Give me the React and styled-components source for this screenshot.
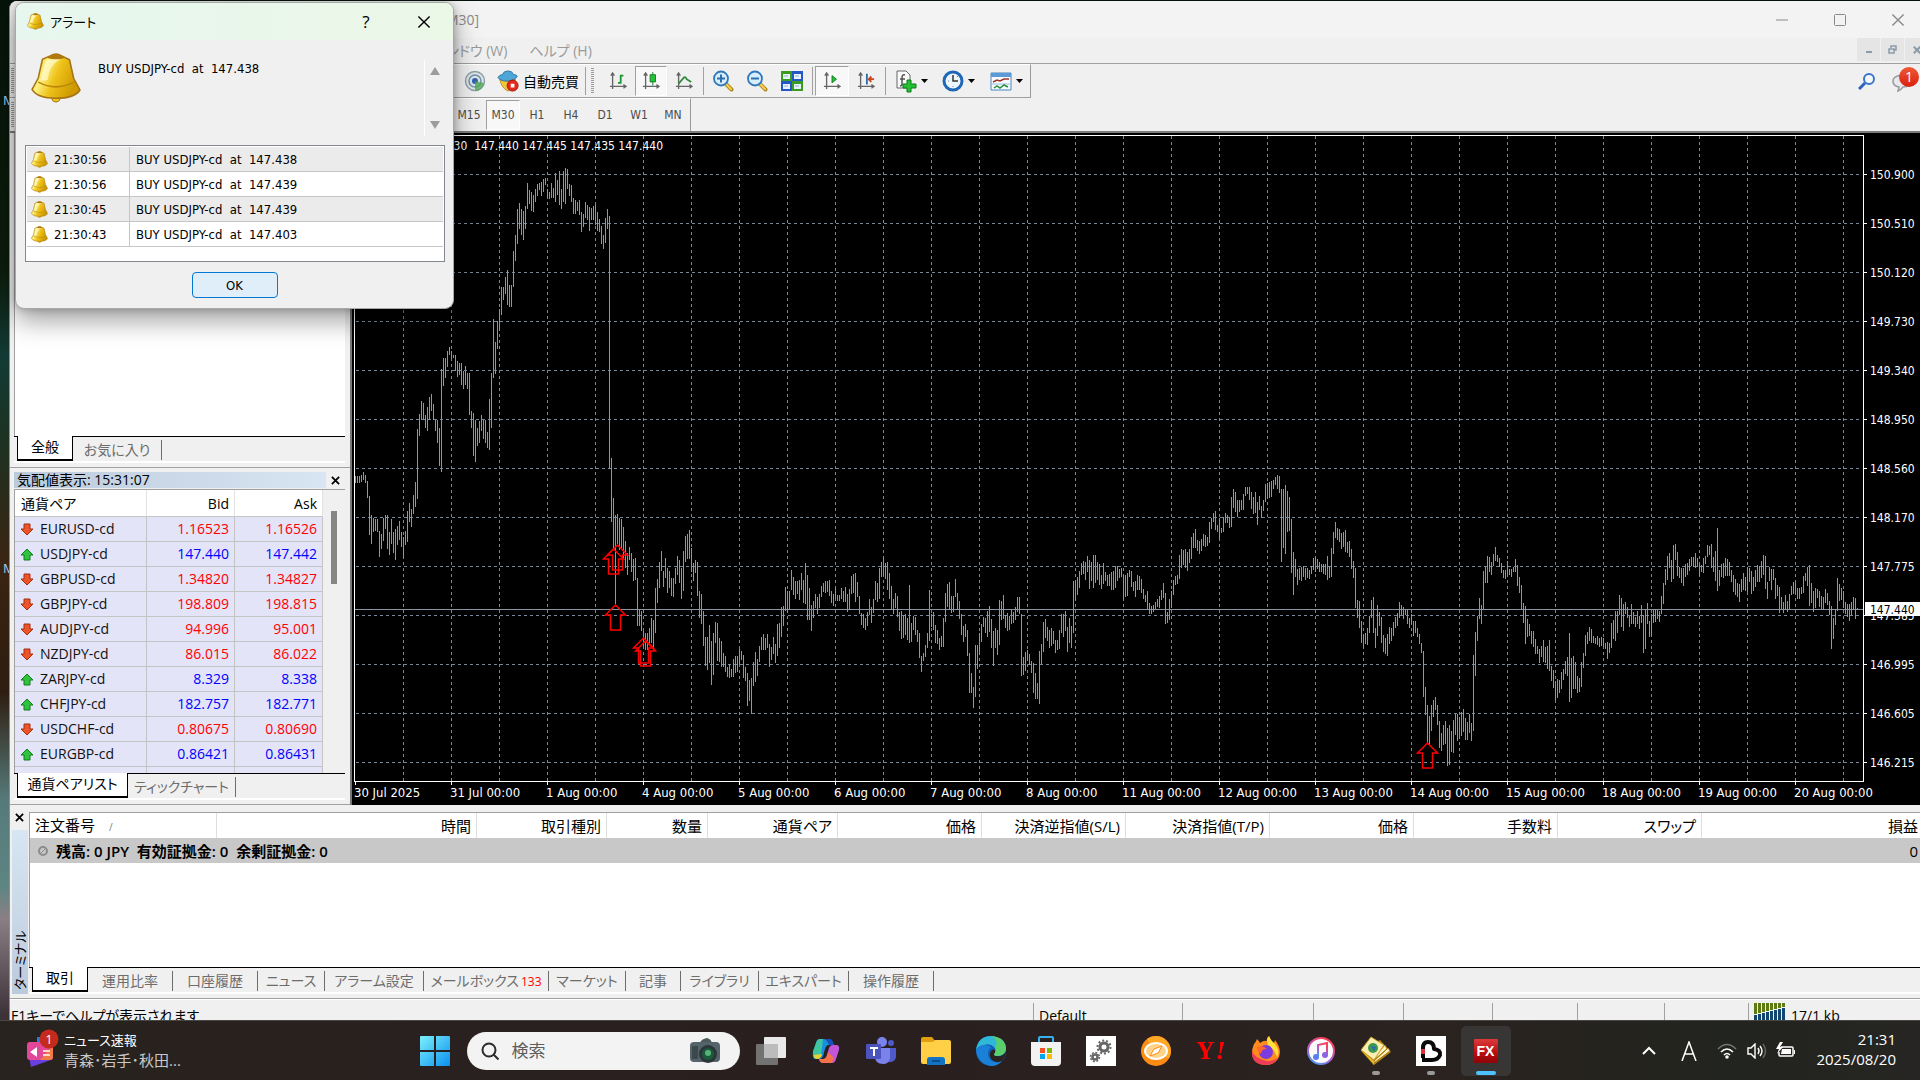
import styled, { createGlobalStyle, css } from 'styled-components'

const uiFont = '"Open Sans", "Noto Sans CJK JP", sans-serif'
const chartFont = '"DejaVu Sans Condensed", "Noto Sans CJK JP", sans-serif'

const GlobalStyle = createGlobalStyle`
  * {
    box-sizing: border-box;
  }

  body {
    margin: 0;
    overflow: hidden;
    font-family: ${uiFont};
    font-size: 14px;
    font-feature-settings: 'palt';
    color: #000;
  }

  button {
    padding: 0;
    border: 0;
    background: none;
    font: inherit;
    color: inherit;
  }

  svg {
    display: block;
    flex: none;
  }
`

const Desktop = styled.div`
  position: relative;
  display: flex;
  flex-direction: column;
  height: 100vh;
  padding-top: 1px;
  background: linear-gradient(#06130a 0%, #0c1c0c 25%, #123a34 33%, #1c3324 40%, #3a2412 52%, #2e1d10 64%, #567a7a 74%, #5d8582 82%, #8a7f84 85%, #3c3238 94%);
`

const DesktopLabel = styled.span`
  position: absolute;
  left: 3px;
  top: ${({ $top }) => $top}px;
  font-size: 13px;
  color: #a9cdf0;
`

const Window = styled.main`
  position: relative;
  display: flex;
  flex: 1;
  flex-direction: column;
  min-height: 0;
  margin-left: 9px;
  overflow: hidden;
  border-left: 1px solid #8d8d8d;
  border-top-left-radius: 8px;
  background: #f0f0f0;
`

const TitleBar = styled.header`
  display: flex;
  flex: none;
  align-items: center;
  height: 37px;
  padding-left: 436px;
  background: #f3f3f3;
  color: #8a8a8a;
`

const Spacer = styled.div`
  flex: 1;
`

const CaptionButton = styled.button`
  display: flex;
  align-items: center;
  justify-content: center;
  width: 58px;
  height: 36px;

  &:last-child {
    margin-right: -7px;
  }
`

const MenuBar = styled.nav`
  display: flex;
  flex: none;
  align-items: center;
  height: 26px;
  padding: 0 0 2px 402px;
  border-bottom: 1px solid #a0a0a0;
  color: #9a9a9a;
`

const MenuItem = styled.button`
  padding: 0 11px;
`

const ChildButton = styled.button`
  display: flex;
  align-items: center;
  justify-content: center;
  width: 23px;
  height: 23px;
  margin-left: 1px;
  background: #e5e5e5;

  &:last-child {
    margin-right: -8px;
  }
`

const ToolArea = styled.div`
  display: flex;
  flex: none;
  border-bottom: 2px solid #7c7c7c;
`

const Toolbars = styled.div`
  flex: 1;
`

const Toolbar = styled.div`
  display: flex;
  align-items: center;
  width: ${({ $width }) => $width}px;
  height: ${({ $line }) => ($line ? 34 : 33)}px;
  padding-left: ${({ $left }) => $left}px;
  border-top: 1px solid #fff;
  border-right: 1px solid #9a9a9a;
  border-bottom: ${({ $line }) => ($line ? '1px solid #a0a0a0' : '0')};
`

const Grip = styled.span`
  flex: none;
  width: 3px;
  height: 26px;
  margin: ${({ $edge }) => ($edge ? '0 432px 0 1px' : '0 7px 0 3px')};
  background: repeating-linear-gradient(#9c9c9c 0 1px, #f0f0f0 1px 2px);
`

const Divider = styled.span`
  width: 1px;
  height: 28px;
  margin: 0 2px;
  background: #a0a0a0;
`

const ToolButton = styled.button`
  display: flex;
  align-items: center;
  justify-content: center;
  gap: 4px;
  flex: none;
  width: ${({ $width = 34 }) => $width}px;
  height: 30px;
  ${({ $pressed }) => $pressed && css`
    border: 1px solid;
    border-color: #a0a0a0 #fff #fff #a0a0a0;
    background: #f8f8f8;
  `}
`

const PeriodButton = styled(ToolButton)`
  font-family: ${chartFont};
  font-size: 12px;
  font-weight: 500;
  color: #4c4c4c;
`

const AppActions = styled.div`
  display: flex;
  align-items: flex-start;
  padding-top: 3px;
`

const ActionButton = styled.button`
  position: relative;
  width: 34px;
  height: 28px;
  padding-left: 1px;

  &:last-child {
    margin-right: -5px;
  }
`

const ChatBadge = styled.span`
  position: absolute;
  top: 0;
  left: 8px;
  width: 20px;
  height: 20px;
  border-radius: 50%;
  background: linear-gradient(#ee5a38, #d8200c);
  font-size: 14px;
  line-height: 20px;
  color: #fff;
`

const Workspace = styled.div`
  display: flex;
  flex: 1;
  min-height: 0;
`

const Sidebar = styled.aside`
  display: flex;
  flex: none;
  flex-direction: column;
  width: 342px;
  border-right: 2px solid #777;
`

const Panel = styled.section`
  display: flex;
  flex-direction: column;
  flex: ${({ $grow }) => ($grow ? 1 : 'none')};
  min-height: 0;
  padding: 0 5px 4px 4px;
  border-bottom: 1px solid #a0a0a0;
`

const PanelBody = styled.div`
  display: flex;
  flex: 1;
  align-items: flex-start;
  min-height: 0;
  overflow: hidden;
  border-left: 1px solid #a0a0a0;
  background: #fff;
`

const QuoteBody = styled(PanelBody)`
  flex: none;
  height: 283px;
`

const PanelTitle = styled.div`
  display: flex;
  align-items: center;
  height: 22px;
  padding-top: 3px;
  border-bottom: 1px solid #a0a0a0;

  h2 {
    flex: 1;
    height: 16px;
    margin: 0;
    padding-left: 3px;
    background: linear-gradient(90deg, #bccbdc, #d8e5f2);
    font-size: 14px;
    font-weight: 400;
    line-height: 16px;
  }
`

const CloseButton = styled.button`
  display: flex;
  align-items: center;
  justify-content: center;
  width: 19px;
  height: 16px;
`

const TabStrip = styled.div`
  display: flex;
  flex: none;
  height: 27px;
  padding-left: 3px;
  border-top: 1px solid #000;
  border-bottom: 2px solid #fff;
`

const Tab = styled.button`
  display: flex;
  align-items: center;
  justify-content: center;
  width: ${({ $width }) => $width}px;
  height: 20px;
  margin-top: 3px;
  padding-bottom: 3px;
  border-right: 1px solid #6d6d6d;
  color: #6d6d6d;
  white-space: nowrap;

  ${({ $active }) => $active && css`
    height: 25px;
    margin-top: -1px;
    border: 1px solid #000;
    border-top: 0;
    border-bottom-width: 2px;
    background: #fff;
    color: #000;
  `}

  sub {
    align-self: flex-end;
    margin-left: 2px;
    font-size: 12px;
    line-height: 12px;
    color: #f00;
  }
`

const QuoteTable = styled.table`
  width: 308px;
  border-spacing: 0;
  table-layout: fixed;

  th,
  td {
    height: 25px;
    padding: 0 5px 0 0;
    border-right: 1px solid #c4c4c4;
    border-bottom: 1px solid #c4c4c4;
    font-weight: 400;
    line-height: 20px;
    text-align: right;
  }

  th {
    height: 27px;
    padding-top: 1px;
    border-right-color: #e2e2e2;
    background: #fff;
  }

  th:first-child {
    padding-left: 6px;
    text-align: left;
  }
`

const QuoteRow = styled.tr`
  background: #e4e4f8;
  color: ${({ $up }) => ($up ? '#00f' : '#f00')};
`

const SymbolCell = styled.td`
  && {
    color: #111;
    text-align: left;
  }

  div {
    display: flex;
    align-items: center;
    gap: 6px;
    padding-left: 5px;
  }
`

const ScrollTrack = styled.div`
  flex: 1;
  height: 100%;
  padding: 21px 0 0 8px;
  background: #f0f0f0;
`

const ScrollThumb = styled.div`
  width: 6px;
  height: 73px;
  background: #868686;
`

const ChartArea = styled.section`
  flex: 1;
  min-width: 0;
  overflow: hidden;
  background: #000;

  svg {
    width: 100%;
    height: 100%;
  }

  text {
    font-family: ${chartFont};
    font-size: 12px;
    fill: #fff;
    white-space: pre;
  }
`

const DateText = styled.text`
  && {
    font-size: 13px;
  }
`

const Terminal = styled.section`
  display: flex;
  flex: none;
  height: 194px;
  padding: 7px 0 4px;
  border-bottom: 1px solid #a0a0a0;
`

const TerminalSide = styled.div`
  display: flex;
  flex: none;
  flex-direction: column;
  align-items: center;
  gap: 5px;
  width: 19px;
  margin-top: -3px;
`

const TerminalTitle = styled.h2`
  display: flex;
  flex: 1;
  width: 16px;
  margin: 0;
  padding-top: 4px;
  background: linear-gradient(#bccbdc, #d8e5f2);
  font-size: 13px;
  font-weight: 400;
  line-height: 16px;
  writing-mode: vertical-rl;
  text-orientation: sideways;
  transform: rotate(180deg);
`

const TerminalMain = styled.div`
  display: flex;
  flex: 1;
  flex-direction: column;
  min-width: 0;
  border-top: 1px solid #a0a0a0;
`

const OrderTable = styled.table`
  width: 100%;
  border-spacing: 0;
  table-layout: fixed;
  font-size: 15px;

  th {
    height: 25px;
    padding: 0 5px;
    border-right: 1px solid #dedede;
    font-weight: 400;
    line-height: 20px;
    text-align: right;
    white-space: nowrap;
  }

  th:first-child {
    text-align: left;
  }

  th:last-child {
    padding-right: 2px;
    border-right: 0;
  }

  td {
    height: 25px;
    padding: 0 2px 0 7px;
    background: #c8c8c8;
    font-weight: 600;
    line-height: 20px;
    white-space: pre;
  }

  td:last-child {
    font-weight: 400;
    text-align: right;
  }

  td div {
    display: flex;
    align-items: center;
    gap: 7px;
  }
`

const SortMark = styled.span`
  margin-left: 14px;
  font-size: 10px;
  color: #777;
`

const StatusBar = styled.footer`
  display: flex;
  flex: none;
  height: 21px;
  padding-top: 3px;
  overflow: hidden;
  border-top: 1px solid #fff;
  line-height: 26px;
`

const StatusCell = styled.div`
  display: flex;
  gap: 5px;
  flex: ${({ $width }) => ($width ? 'none' : 1)};
  width: ${({ $width }) => ($width ? `${$width}px` : 'auto')};
  height: 30px;
  padding-left: ${({ $first }) => ($first ? 1 : 5)}px;
  border-left: ${({ $first }) => ($first ? '0' : '1px solid #a0a0a0')};
`

const Dialog = styled.div`
  position: absolute;
  top: 2px;
  left: 15px;
  width: 439px;
  overflow: hidden;
  border: 1px solid #a5aaa6;
  border-radius: 9px;
  background: #f0f0f0;
  box-shadow: 0 12px 26px rgba(0, 0, 0, 0.36), 0 0 8px rgba(0, 0, 0, 0.25);
  font-family: ${chartFont};
  font-size: 13px;
`

const DialogTitle = styled.header`
  display: flex;
  align-items: center;
  height: 37px;
  padding-left: 11px;
  background: linear-gradient(90deg, #e7f7ef, #ebf7e7);
  font-family: ${uiFont};

  h1 {
    flex: 1;
    margin: 0 0 0 6px;
    font-size: 13px;
    font-weight: 400;
  }
`

const DialogButton = styled.button`
  display: flex;
  align-items: center;
  justify-content: center;
  width: 58px;
  height: 36px;
  font-size: 17px;
`

const Message = styled.div`
  display: flex;
  height: 105px;
  padding: 13px 9px 0 15px;

  p {
    flex: 1;
    margin: 7px 0 0 17px;
    line-height: 18px;
    white-space: pre;
  }
`

const MessageScroll = styled.div`
  display: flex;
  flex-direction: column;
  justify-content: space-between;
  width: 20px;
  height: 76px;
  margin-top: 7px;
  padding: 7px 5px;
  border-left: 1px solid #fff;
`

const AlertList = styled.div`
  height: 117px;
  margin: 0 8px 0 9px;
  padding: 1px;
  border: 1px solid #828790;
  background: #fff;

  table {
    width: 100%;
    border-spacing: 0;
    table-layout: fixed;
  }

  td {
    height: 25px;
    padding: 1px 0 0 6px;
    border-bottom: 1px solid #c6c6c6;
    line-height: 20px;
    white-space: pre;
  }

  td:first-child {
    border-right: 1px solid #c6c6c6;
    padding-left: 4px;
  }

  td div {
    display: flex;
    align-items: center;
    gap: 6px;
  }

  tr:nth-child(odd) {
    background: #ebebeb;
  }
`

const DialogFooter = styled.div`
  display: flex;
  justify-content: center;
  padding: 10px 0 10px;
`

const OkButton = styled.button`
  width: 86px;
  height: 26px;
  border: 1px solid #0078d4;
  border-radius: 4px;
  background: #e0eef9;
`

const Taskbar = styled.div`
  position: relative;
  display: flex;
  flex: none;
  height: 60px;
  border-top: 1px solid #4a4644;
  background: linear-gradient(90deg, #28231f, #2a1f1f 45%, #2a2320 75%, #22241f 90%, #262523);
`

const TaskSide = styled.div`
  display: flex;
  flex: 1;
  align-items: center;
  justify-content: ${({ $end }) => ($end ? 'flex-end' : 'flex-start')};
  padding: 0 24px;
  color: #fff;
`

const News = styled.button`
  display: flex;
  align-items: center;
  gap: 8px;
  padding-bottom: 2px;
  font-size: 13px;
  line-height: 20px;
  text-align: left;

  svg {
    overflow: visible;
  }

  span {
    display: block;
    font-size: 15px;
    color: #c9c9c9;
  }
`

const TaskCenter = styled.div`
  display: flex;
  align-items: center;
  gap: 5px;
`

const TaskButton = styled.button`
  position: relative;
  display: flex;
  align-items: center;
  justify-content: center;
  width: 50px;
  height: 50px;
  border-radius: 5px;
  background: ${({ $active }) => ($active ? '#383634' : 'transparent')};

  &::after {
    content: ${({ $running }) => ($running ? '""' : 'none')};
    position: absolute;
    bottom: 1px;
    left: 50%;
    width: ${({ $active }) => ($active ? 20 : 8)}px;
    height: 4px;
    border-radius: 2px;
    background: ${({ $active }) => ($active ? '#4cc2ff' : '#9a9a9a')};
    transform: translateX(-50%);
  }
`

const SearchBox = styled.label`
  display: flex;
  align-items: center;
  width: 273px;
  height: 38px;
  margin: 0 1px 0 2px;
  padding: 0 20px 0 14px;
  border-radius: 19px;
  background: #f4f3f3;

  input {
    flex: 1;
    min-width: 0;
    padding: 0 0 0 13px;
    border: 0;
    outline: 0;
    background: none;
    font: inherit;
    font-size: 17px;
    color: #5e5e5e;
  }

  input::placeholder {
    color: #5e5e5e;
    opacity: 1;
  }
`

const TrayButton = styled.button`
  display: flex;
  align-items: center;
  justify-content: center;
  width: ${({ $width }) => $width}px;
  height: 40px;
`

const Clock = styled.time`
  width: 94px;
  padding-bottom: 3px;
  font-size: 15px;
  line-height: 20px;
  text-align: right;
`

const quotes = [
  ['EURUSD-cd', '1.16523', '1.16526', false],
  ['USDJPY-cd', '147.440', '147.442', true],
  ['GBPUSD-cd', '1.34820', '1.34827', false],
  ['GBPJPY-cd', '198.809', '198.815', false],
  ['AUDJPY-cd', '94.996', '95.001', false],
  ['NZDJPY-cd', '86.015', '86.022', false],
  ['ZARJPY-cd', '8.329', '8.338', true],
  ['CHFJPY-cd', '182.757', '182.771', true],
  ['USDCHF-cd', '0.80675', '0.80690', false],
  ['EURGBP-cd', '0.86421', '0.86431', true],
]

const alerts = [
  ['21:30:56', 'BUY USDJPY-cd  at  147.438'],
  ['21:30:56', 'BUY USDJPY-cd  at  147.439'],
  ['21:30:45', 'BUY USDJPY-cd  at  147.439'],
  ['21:30:43', 'BUY USDJPY-cd  at  147.403'],
]

const orderColumns = [
  ['注文番号', 187],
  ['時間', 260],
  ['取引種別', 130],
  ['数量', 101],
  ['通貨ペア', 130],
  ['価格', 144],
  ['決済逆指値(S/L)', 144],
  ['決済指値(T/P)', 144],
  ['価格', 144],
  ['手数料', 144],
  ['スワップ', 144],
  ['損益'],
]

const terminalTabs = [
  ['取引', 56],
  ['運用比率', 85],
  ['口座履歴', 85],
  ['ニュース', 67],
  ['アラーム設定', 99],
  ['メールボックス', 125, '133'],
  ['マーケット', 77],
  ['記事', 55],
  ['ライブラリ', 78],
  ['エキスパート', 90],
  ['操作履歴', 85],
]

const dates = [
  '30 Jul 2025', '31 Jul 00:00', '1 Aug 00:00', '4 Aug 00:00', '5 Aug 00:00', '6 Aug 00:00',
  '7 Aug 00:00', '8 Aug 00:00', '11 Aug 00:00', '12 Aug 00:00', '13 Aug 00:00', '14 Aug 00:00',
  '15 Aug 00:00', '18 Aug 00:00', '19 Aug 00:00', '20 Aug 00:00',
]

const prices = [
  '150.900', '150.510', '150.120', '149.730', '149.340', '148.950', '148.560',
  '148.170', '147.775', '147.385', '146.995', '146.605', '146.215',
]

// high-low of every M30 bar, in chart units from the top
const bars = `
476-483 476-483 476-483 475-482 472-480 475-483 481-498 496-535 515-544 518-532 519-531 519-532 531-557 534-549 518-541 515-529
515-549 532-555 519-544 532-553 529-560 526-545 521-540 532-547 537-558 531-545 511-542 503-522 509-527 495-514 482-507 429-499
414-436 401-420 403-420 415-428 407-431 397-420 394-411 404-420 420-431 420-443 428-466 369-472 358-386 358-378 351-367 347-355
351-359 355-358 355-371 361-377 363-375 363-385 371-389 366-385 373-389 373-415 411-428 413-456 420-462 428-446 421-443 415-431
420-439 420-443 432-448 399-450 373-428 319-378 342-374 321-349 309-330 287-315 287-300 277-294 270-305 285-307 285-307 251-287
235-261 209-244 203-229 209-235 211-240 206-229 183-209 190-204 192-211 195-212 189-202 184-196 183-190 182-196 179-192 178-185
189-198 192-199 183-198 188-198 173-202 180-195 171-205 189-209 171-202 168-204 169-189 184-196 185-202 198-214 200-214 202-211
200-215 212-232 214-227 202-218 205-220 207-231 208-220 206-220 205-225 212-231 219-232 226-244 235-249 218-243 209-229 216-469
458-522 498-550 515-604 514-544 518-550 519-548 527-559 541-568 553-575 547-560 553-572 559-581 558-580 578-626 610-626 611-631
631-646 633-650 633-650 628-646 618-643 620-650 588-633 579-603 562-588 551-571 571-587 558-578 568-593 571-588 578-596 578-597
568-584 556-575 560-583 568-599 551-591 536-562 534-559 530-559 548-572 563-581 560-573 562-596 591-618 594-624 611-646 637-666
637-670 625-663 641-685 633-675 622-643 623-661 638-662 641-667 653-667 656-672 667-677 664-678 669-677 659-677 656-673 656-672
649-664 651-660 655-678 667-681 673-706 680-701 678-714 662-686 652-682 659-676 646-662 637-650 634-650 638-650 634-648 644-667
647-660 637-654 644-663 624-656 623-648 607-637 606-626 587-611 591-612 591-609 570-590 577-595 581-599 581-594 580-600 573-590
580-603 563-604 575-620 588-620 605-631 601-618 594-608 597-614 594-608 586-597 583-592 581-593 581-592 580-596 591-603 594-606
588-599 595-601 595-601 588-599 591-602 587-602 594-612 589-610 576-594 574-593 573-602 582-597 596-614 613-625 614-628 618-630
612-626 599-615 607-623 599-613 581-600 583-602 568-599 562-577 557-576 563-579 562-590 573-599 586-609 599-614 593-608 596-617
612-631 611-639 616-638 614-635 618-640 585-643 623-642 616-630 617-635 630-642 633-658 656-672 653-661 645-657 633-648 590-641
614-627 612-630 625-643 630-644 638-650 636-647 618-647 593-622 584-607 582-609 596-613 596-612 579-597 593-610 601-619 614-635
626-642 624-637 630-656 653-693 673-693 687-708 645-697 645-669 633-655 624-642 617-627 618-633 611-637 606-632 619-648 631-666
628-648 630-655 600-645 601-620 595-619 615-628 613-631 616-630 609-624 612-623 607-620 597-612 597-614 614-676 657-675 652-671
650-660 654-665 661-673 663-693 673-699 683-699 651-704 644-664 622-652 619-638 627-641 630-648 628-646 631-644 640-653 640-650
630-649 614-633 614-637 611-631 627-652 618-643 626-648 581-633 580-601 577-595 571-588 563-575 561-574 562-580 556-572 560-589
562-581 555-588 555-583 562-580 564-585 575-589 563-584 572-581 575-586 574-586 572-590 571-590 566-588 566-581 569-578 568-577
575-599 575-597 573-596 570-577 571-587 582-591 581-597 575-590 576-590 579-593 589-599 595-602 591-609 603-614 606-614 605-612
602-610 599-607 596-608 590-600 583-598 593-624 612-623 599-620 591-608 580-595 576-585 575-584 555-579 549-568 550-565 549-568
552-571 549-563 537-559 533-548 529-548 540-551 541-554 539-551 534-546 535-547 537-546 522-543 518-529 513-522 511-530 525-532
518-539 528-533 517-532 513-523 515-523 517-528 497-527 489-508 492-512 500-517 500-512 500-510 494-510 487-496 487-494 487-500
492-509 497-514 492-513 502-525 496-510 506-518 500-511 484-502 483-498 482-498 481-497 480-489 477-485 475-489 476-493 489-562
489-548 485-554 491-532 497-531 519-573 552-595 559-577 569-585 568-580 567-581 566-577 568-580 568-578 570-579 566-574 558-570
557-572 559-569 562-572 564-572 564-574 564-575 556-580 566-578 548-577 532-554 522-538 528-540 529-542 533-549 532-547 530-552
542-553 541-557 549-569 561-578 568-608 600-618 601-628 621-643 635-648 633-644 628-645 616-633 600-618 597-633 628-648 605-636
612-626 617-643 635-652 638-654 634-656 627-644 628-641 622-636 617-628 613-626 602-618 605-615 607-619 609-615 610-624 618-628
614-624 621-636 621-633 628-637 634-644 643-653 651-697 687-715 705-743 716-745 705-731 700-717 697-710 705-725 721-748 733-751
725-745 721-744 728-766 725-765 731-752 720-753 714-735 714-741 717-739 712-736 709-732 718-740 722-740 714-733 723-741 655-731
632-676 616-641 598-619 605-624 571-609 567-583 556-583 557-572 562-575 554-566 547-561 555-562 558-567 563-573 570-578 570-579
561-577 569-575 569-577 567-572 559-572 565-586 577-593 585-609 603-623 606-644 619-637 624-636 631-644 631-647 639-654 646-654
649-663 646-657 640-662 647-663 646-669 640-671 666-681 670-688 681-700 679-698 680-693 672-689 669-680 661-674 657-676 633-702
658-698 656-689 662-689 676-693 678-692 662-687 653-668 635-656 632-644 627-641 629-643 636-643 638-644 636-645 638-647 637-646
638-647 643-649 642-659 643-653 623-648 620-639 611-641 611-633 595-615 598-627 604-631 602-614 607-618 616-627 604-624 612-624
617-627 611-624 616-629 605-623 615-653 610-649 603-624 621-637 614-635 609-623 610-622 610-619 611-622 596-614 583-604 569-585
556-580 553-568 560-582 545-579 544-560 552-576 567-578 568-583 568-586 564-577 563-575 559-571 557-566 557-567 553-568 558-567
563-576 565-572 558-573 556-564 545-557 546-555 544-568 557-572 551-581 528-591 570-586 564-577 563-578 558-576 559-576 562-576
570-582 575-592 579-595 583-597 584-602 579-592 573-590 577-591 567-592 568-582 571-594 577-591 570-587 565-582 566-582 561-578
555-575 556-589 582-599 567-581 569-590 569-580 578-599 585-596 587-613 597-610 602-613 595-610 601-612 594-609 586-595 582-594
583-594 588-599 588-599 587-594 576-593 573-581 567-586 565-606 583-603 591-612 588-608 589-598 591-607 596-609 597-609 589-603
593-605 601-615 606-649 618-639 610-625 578-611 584-601 588-600 591-608 602-614 604-617 604-621 602-615 597-609 598-619 608-610
`.trim().split(/\s+/).map((bar) => bar.split('-'))

const barPath = bars.map(([high, low], i) => `M${355 + i * 2} ${high}h1V${low}h-1z`).join('')

const signals = [[617, 545], [613, 549], [615, 605], [643, 638], [645, 641], [1427, 743]]

const Chart = () => (
  <ChartArea>
    <svg viewBox="352 133 1568 672" preserveAspectRatio="xMinYMin meet" role="img" aria-label="USDJPY-cd,M30">
      <g shapeRendering="crispEdges">
        <g stroke="#778899" strokeDasharray="3 3">
          {prices.map((price, i) => (
            <line key={price} x1="356" x2="1860" y1={174.5 + i * 49} y2={174.5 + i * 49} />
          ))}
          {Array.from({ length: 31 }, (_, i) => (
            <line key={i} x1={403.5 + i * 48} x2={403.5 + i * 48} y1="136" y2="781" />
          ))}
        </g>
        <path d="M354 135h1510v647h-1V136H355v645h1509v1H354z" fill="#fff" />
        <path d="M355 609h1508v1H355z" fill="#8896a6" />
        <path d={barPath} fill="#00ff00" />
      </g>
      <g fill="none" stroke="#f00" strokeWidth="1.5">
        {signals.map(([x, y]) => (
          <path key={x} d={`M${x + 0.5} ${y}l10 10h-5v15h-10v-15h-5z`} />
        ))}
      </g>
      <text x="663" y="150" textAnchor="end">USDJPY-cd,M30  147.440 147.445 147.435 147.440</text>
      {dates.map((date, i) => (
        <g key={date}>
          <path d={`M${355 + i * 96} 781h1v4h-1z`} fill="#fff" />
          <DateText x={354 + i * 96} y="797">{date}</DateText>
        </g>
      ))}
      {prices.map((price, i) => (
        <g key={price}>
          <path d={`M1864 ${174 + i * 49}h3v1h-3z`} fill="#fff" />
          <text x="1870" y={179 + i * 49}>{price}</text>
        </g>
      ))}
      <path d="M1865 602h55v14h-55z" fill="#fff" />
      <text x="1870" y="614" style={{ fill: '#000' }}>147.440</text>
    </svg>
  </ChartArea>
)

const BellIcon = ({ size }) => (
  <svg width={size} height={size} viewBox="0 0 48 48">
    <defs>
      <linearGradient id="bell" x1="0" x2="1" y1="0" y2="0.4">
        <stop offset="0" stopColor="#f3cf2a" />
        <stop offset="0.35" stopColor="#fdf080" />
        <stop offset="0.6" stopColor="#eec21a" />
        <stop offset="1" stopColor="#cf9a00" />
      </linearGradient>
    </defs>
    <circle cx="24" cy="43" r="4" fill="#f0c419" stroke="#9b6c10" />
    <path d="M19 2.5q5-3 10 0l8 4 4 18 6 11q-5 8-23 8T1 35l6-11 4-18z" fill="url(#bell)" stroke="#a57314" strokeWidth="1.5" />
    <path d="M14 8q6-3 14-2-11 6-12 20-5 1-7 0z" fill="#fffbd0" opacity="0.7" />
    <path d="M19 2.5q5-3 10 0l4 2q-9 3-18 0z" fill="#b07a0e" />
    <path d="M7 28q17 9 34 0" fill="none" stroke="#b8860b" strokeWidth="1.5" />
  </svg>
)

const ArrowIcon = ({ up }) => (
  <svg width="14" height="13" viewBox="0 0 14 13">
    <path
      d={up ? 'M7 1l6 6h-3v5H4V7H1z' : 'M7 12l6-6h-3V1H4v5H1z'}
      fill={up ? '#2fc23c' : '#ee5428'}
      stroke={up ? '#157a20' : '#a32f10'}
    />
  </svg>
)

const CrossIcon = ({ size = 9, color = '#000', weight = 1.5 }) => (
  <svg width={size} height={size} viewBox="0 0 10 10">
    <path d="M1 1l8 8M9 1L1 9" stroke={color} strokeWidth={weight} />
  </svg>
)

const CaretIcon = () => (
  <svg width="7" height="4" viewBox="0 0 7 4"><path d="M0 0h7L3.5 4z" /></svg>
)

const AxisIcon = ({ children }) => (
  <svg width="18" height="18" viewBox="0 0 20 20">
    <path d="M4 1v18M1 16h18M2 4l2-3 2 3M16 14l3 2-3 2" fill="none" stroke="#666" strokeWidth="1.5" />
    {children}
  </svg>
)

const Magnifier = ({ plus }) => (
  <svg width="22" height="22" viewBox="0 0 22 22">
    <path d="M13 13l6.5 6.5" stroke="#b58a1c" strokeWidth="4" strokeLinecap="round" />
    <path d="M13 13l6 6" stroke="#f0cf5a" strokeWidth="2" strokeLinecap="round" />
    <circle cx="9" cy="8.5" r="7" fill="#d9eefc" stroke="#2f78bd" strokeWidth="1.8" />
    <path d={plus ? 'M5 8.5h8M9 4.5v8' : 'M5 8.5h8'} stroke="#2c6fae" strokeWidth="2" />
  </svg>
)

const SignalIcon = () => (
  <svg width="22" height="22" viewBox="0 0 22 22" fill="none">
    <circle cx="11" cy="11" r="9.5" fill="#dfe4e6" stroke="#8f9fa8" strokeWidth="1.5" />
    <circle cx="11" cy="11" r="6" stroke="#6f93ac" strokeWidth="1.5" />
    <circle cx="11" cy="11" r="3" fill="#2f62b0" />
    <path d="M11 11v10q8-1 9-8z" fill="#4aa84e" opacity="0.75" />
  </svg>
)

const ExpertIcon = () => (
  <svg width="22" height="22" viewBox="0 0 24 24">
    <path d="M3 10q8 5 17 0l-2 8-6 5q-7-3-9-13z" fill="#f3c73c" stroke="#b8891b" />
    <path d="M1 8q2-3 5-3 1-4 6-4t6 4q4 0 4 2-3 5-11 5T1 8z" fill="#4ca6d8" stroke="#2a78a8" />
    <circle cx="17" cy="17" r="6" fill="#e02a1c" stroke="#a81208" />
    <path d="M15 15h4v4h-4z" fill="#fff" />
  </svg>
)

const TileIcon = () => (
  <svg width="22" height="22" viewBox="0 0 22 22">
    <path d="M0 1h11v10H0zM11 11h11v10H11z" fill="#3a9c1e" />
    <path d="M11 1h11v10H11zM0 11h11v10H0z" fill="#2456c8" />
    <path d="M2 4h7v5H2zM13 4h7v5h-7zM2 14h7v5H2zM13 14h7v5h-7z" fill="#e9f1fb" />
    <path d="M3 6h4M14 6h4M3 16h4M14 16h4" stroke="#8fb4dd" />
  </svg>
)

const IndicatorIcon = () => (
  <svg width="22" height="23" viewBox="0 0 22 23">
    <path d="M2 1h9l4 4v13H2z" fill="#fafafa" stroke="#666" />
    <path d="M10 5q-3-1-3 3v6q0 2-2 2M5 9h5" fill="none" stroke="#555" strokeWidth="1.5" />
    <path d="M12 10h4v4h5v4h-5v4h-4v-4H8v-4h4z" fill="#22c032" stroke="#0c7a18" />
  </svg>
)

const ClockIcon = () => (
  <svg width="22" height="22" viewBox="0 0 22 22">
    <circle cx="11" cy="11" r="9" fill="#eef6fd" stroke="#1f68b8" strokeWidth="3" />
    <path d="M11 5v6h5" fill="none" stroke="#333" strokeWidth="1.5" />
    <path d="M6 11h1M11 16v1M15 7l1-1" stroke="#6d8fae" />
  </svg>
)

const TemplateIcon = () => (
  <svg width="22" height="19" viewBox="0 0 22 19">
    <path d="M1 1h20v17H1z" fill="#f6fafe" stroke="#4a86bf" />
    <path d="M1 1h20v4H1z" fill="#5a9ad6" />
    <path d="M3 10l4-2 3 1 4-2 5 0" fill="none" stroke="#a0342a" strokeWidth="1.5" />
    <path d="M1 12h20" stroke="#9cc0e0" />
    <path d="M4 16l3-2 3 2 4-3 4 2" fill="none" stroke="#2c9040" strokeWidth="1.5" />
  </svg>
)

const SearchIcon = () => (
  <svg width="18" height="18" viewBox="0 0 18 18" fill="none" stroke="#2b2b2b" strokeWidth="2">
    <circle cx="8" cy="8" r="6.5" />
    <path d="M12.5 12.5l5 5" />
  </svg>
)

const NewsIcon = () => (
  <svg width="32" height="36" viewBox="0 0 32 36">
    <path d="M5 25l2 10 20-7V14z" fill="#6a3fe0" />
    <path d="M13 5h12v20H13z" fill="#2b7de0" />
    <rect x="3" y="10" width="26" height="18" rx="3" fill="#e2479a" />
    <path d="M16 28h10q3 0 3-3V13z" fill="#f07a48" />
    <path d="M6 20l7-5v10z" fill="#fff" />
    <path d="M19 19h7M19 23h7" stroke="#ffd9c0" strokeWidth="2" />
    <circle cx="25" cy="7" r="9.5" fill="#c42b1c" />
    <text x="25" y="12" fontSize="13" textAnchor="middle" fill="#fff">1</text>
  </svg>
)

const StartIcon = () => (
  <svg width="30" height="30" viewBox="0 0 30 30">
    <defs>
      <linearGradient id="start" x1="0" x2="1" y1="0" y2="1">
        <stop offset="0" stopColor="#7df0fb" />
        <stop offset="1" stopColor="#0a90f0" />
      </linearGradient>
    </defs>
    <path d="M0 1q0-1 1-1h13v14H0zM16 0h13q1 0 1 1v13H16zM0 16h14v14H1q-1 0-1-1zM16 16h14v13q0 1-1 1H16z" fill="url(#start)" />
  </svg>
)

const CameraIcon = () => (
  <svg width="30" height="26" viewBox="0 0 30 26">
    <path d="M10 5q1-4 7-5 4 1 5 5z" fill="#4c5a60" />
    <rect y="4" width="30" height="20" rx="4" fill="#55646a" />
    <path d="M2 8h6v13H2z" fill="#3c484d" />
    <circle cx="18" cy="16" r="9" fill="#2c3538" />
    <circle cx="18" cy="16" r="6" fill="#1c5a3c" />
    <circle cx="18" cy="15" r="3" fill="#58b07a" />
  </svg>
)

const TaskViewIcon = () => (
  <svg width="30" height="30" viewBox="0 0 30 30">
    <rect y="8" width="22" height="21" rx="1" fill="#727272" />
    <rect x="8" y="1" width="22" height="21" rx="1" fill="#e9e9e9" />
    <path d="M8 8h14v14H9l-1-1z" fill="#bcbcbc" />
  </svg>
)

const CopilotIcon = () => (
  <svg width="28" height="28" viewBox="0 0 28 28">
    <path d="M8 2h9q3 0 4 4l1 2h-5q-3 0-4 4l-2 7q-1 3-4 3H4q-4 0-3-5l3-11q1-4 4-4z" fill="#1a8fe0" />
    <path d="M1 14l3-8q1-4 4-4h3L9 18q-1 4-4 4-5 0-4-8z" fill="#3fc6a0" />
    <path d="M2 18l8-1q-1 5-5 5-3 0-3-4z" fill="#f0d030" />
    <path d="M20 26h-9q-3 0-4-4h4q3 0 4-4l2-7q1-3 4-3h3q4 0 3 5l-3 9q-1 4-4 4z" fill="#c256d8" />
    <path d="M20 26h-9q-3 0-4-4h4q3 0 4-4l1-3 6 6z" fill="#f4714a" />
    <path d="M8 2h9q3 0 4 4l1 2h-5q-2-6-6-6z" fill="#1650c0" />
  </svg>
)

const TeamsIcon = () => (
  <svg width="30" height="28" viewBox="0 0 30 28">
    <circle cx="16" cy="5" r="5" fill="#7b83eb" />
    <circle cx="25" cy="6" r="3" fill="#5059c9" />
    <path d="M20 11h10v9q-1 6-8 5z" fill="#5059c9" />
    <path d="M9 11h15v10q-1 6-7 6-8 0-8-8z" fill="#7b83eb" />
    <rect y="7" width="15" height="15" rx="1" fill="#4b53bc" />
    <path d="M4 11h8M8 11v8" stroke="#fff" strokeWidth="2" />
  </svg>
)

const FolderIcon = () => (
  <svg width="30" height="28" viewBox="0 0 30 28">
    <path d="M0 2q0-2 2-2h9l3 4v8H0z" fill="#e0a010" />
    <path d="M0 5h12l2-2h14q2 0 2 2v20q0 2-2 2H2q-2 0-2-2z" fill="#ffcf45" />
    <path d="M6 28v-5q0-3 3-3h12q3 0 3 3v5z" fill="#1273c4" />
    <path d="M11 24h8" stroke="#0a4d8c" strokeWidth="2" />
  </svg>
)

const EdgeIcon = () => (
  <svg width="30" height="30" viewBox="0 0 30 30">
    <circle cx="15" cy="15" r="15" fill="#0f62b4" />
    <path d="M0 14Q2 0 15 0q14 1 15 12 0 7-8 8-4 0-4-2 3-4 0-7-4-4-10-2-6 1-8 5z" fill="#2fb8d8" />
    <path d="M15 0q14 1 15 12 0 7-8 8-4 0-4-2 3-4 1-7Q24 5 15 0z" fill="#5ad06c" />
    <path d="M0 14q2 14 15 16 7 0 11-5-9 3-13-3-3-6 2-11-9-5-15 3z" fill="#1a80d8" />
    <path d="M19 14q1 2-1 4-1 2 3 2 5 1 9-4-1 5-4 9-7 3-11-2-3-6 1-9 2-1 3 0z" fill="#2a2320" />
  </svg>
)

const StoreIcon = () => (
  <svg width="30" height="30" viewBox="0 0 30 30">
    <path d="M8 7V2q0-1 1-1h12q1 0 1 1v5" fill="none" stroke="#36b0ee" strokeWidth="2" />
    <path d="M0 6h30v20q0 4-4 4H4q-4 0-4-4z" fill="#f2f2f2" />
    <path d="M9 12h5v5H9z" fill="#f25022" />
    <path d="M16 12h5v5h-5z" fill="#7fba00" />
    <path d="M9 18h5v5H9z" fill="#00a4ef" />
    <path d="M16 18h5v5h-5z" fill="#ffb900" />
  </svg>
)

const GearsIcon = () => (
  <svg width="30" height="30" viewBox="0 0 30 30" fill="none" stroke="#666">
    <path d="M0 0h30v30H0z" fill="#fff" stroke="none" />
    <circle cx="18" cy="11" r="4" strokeWidth="3" />
    <circle cx="18" cy="11" r="6.5" strokeWidth="2" strokeDasharray="2 2" />
    <circle cx="9" cy="21" r="2.5" strokeWidth="2.5" />
    <circle cx="9" cy="21" r="4.5" strokeWidth="1.5" strokeDasharray="2 1.5" />
  </svg>
)

const CompassIcon = () => (
  <svg width="30" height="30" viewBox="0 0 30 30">
    <circle cx="15" cy="15" r="15" fill="#ff8c12" />
    <path d="M15 0a15 15 0 0 1 13 22Q14 20 6 3q4-3 9-3z" fill="#ffa826" />
    <ellipse cx="15" cy="15" rx="11" ry="8" fill="#ffd489" stroke="#fff" strokeWidth="2" />
    <path d="M21 10l-4 7-8 3 4-7z" fill="#fff" stroke="#ff8c12" />
  </svg>
)

const YahooLogo = styled.span`
  font-family: 'Liberation Serif', serif;
  font-size: 25px;
  font-weight: 700;
  line-height: 30px;
  color: #f00;

  i {
    margin-left: 1px;
  }
`

const FirefoxIcon = () => (
  <svg width="28" height="30" viewBox="0 0 28 30">
    <path d="M2 8q2-2 3-5 2 2 3 4 4-3 7-2-1-3 2-5 2 5 5 7l1-3q7 9 4 17-4 8-13 8Q2 29 0 18q0-6 2-10z" fill="#ff8a1e" />
    <path d="M17 0q2 5 5 7 7 8 3 14-3-9-8-10-4-7 0-11z" fill="#ffdf3c" />
    <path d="M0 16q-1 12 13 13 9 0 13-7-8 5-15 2Q3 21 0 16z" fill="#f03a5a" />
    <circle cx="14" cy="16" r="7" fill="#7a3ce0" />
    <path d="M5 11q6-2 10 2-6 0-6 5-4-3-4-7z" fill="#ff6a2c" />
  </svg>
)

const MusicIcon = () => (
  <svg width="28" height="28" viewBox="0 0 28 28">
    <defs>
      <linearGradient id="music" x1="0" x2="0.5" y1="1" y2="0">
        <stop offset="0" stopColor="#35a8f8" />
        <stop offset="0.5" stopColor="#b05ad8" />
        <stop offset="1" stopColor="#f8405c" />
      </linearGradient>
    </defs>
    <circle cx="14" cy="14" r="13" fill="#fafafa" stroke="url(#music)" strokeWidth="2" />
    <path d="M11 19V8l9-2v11" fill="none" stroke="url(#music)" strokeWidth="2" />
    <circle cx="9" cy="20" r="3" fill="#5a7ef0" />
    <circle cx="18" cy="18" r="3" fill="#8c62e0" />
  </svg>
)

const BookIcon = () => (
  <svg width="30" height="30" viewBox="0 0 30 30">
    <path d="M0 15l13 14 17-13L19 4z" fill="#b8860f" />
    <path d="M13 27l16-12-2-3-14 13zM13 24l13-11-2-4-11 12z" fill="#fff3c0" stroke="#a97810" />
    <path d="M0 14L10 1l13 8-10 15z" fill="#fbeeb0" stroke="#c59a24" />
    <circle cx="12" cy="12" r="5" fill="#3b9a50" />
    <path d="M10 10l5 1-2 4z" fill="#2f66c0" />
    <path d="M1 15l12 10v4z" fill="#e5b62c" />
  </svg>
)

const HeartIcon = () => (
  <svg width="30" height="30" viewBox="0 0 30 30" fill="none">
    <path d="M0 0h30v30H0z" fill="#fff" />
    <path d="M7 22V12q0-6 5-6 6 0 6 7 7 1 6 6-2 5-8 5H6" stroke="#0a0a0a" strokeWidth="4" strokeLinejoin="round" />
    <path d="M7 13v5" stroke="#e0303c" strokeWidth="4" />
  </svg>
)

const FxTile = styled.span`
  width: 24px;
  height: 24px;
  border-radius: 1px;
  background: linear-gradient(#dc3a3a, #b80c10 60%, #8e0508);
  font-family: 'Liberation Sans', sans-serif;
  font-size: 14px;
  font-weight: 700;
  line-height: 24px;
  color: #fff;
`

const WifiIcon = () => (
  <svg width="20" height="16" viewBox="0 0 20 16" fill="none" stroke="#fff" strokeWidth="1.6">
    <path d="M1 6q9-9 18 0" stroke="#777" />
    <path d="M4 9q6-6 12 0M7 12q3-3 6 0" />
    <circle cx="10" cy="14" r="1" fill="#fff" />
  </svg>
)

const SpeakerIcon = () => (
  <svg width="20" height="16" viewBox="0 0 20 16" fill="none" stroke="#fff" strokeWidth="1.4">
    <path d="M1 5h3l4-4v14l-4-4H1z" />
    <path d="M11 5q2 3 0 6" />
    <path d="M13 3q4 5 0 10" />
    <path d="M16 1q5 7 0 14" stroke="#666" />
  </svg>
)

const BatteryIcon = () => (
  <svg width="20" height="17" viewBox="0 0 20 17">
    <path d="M5 5h11q1 0 1 1v7q0 1-1 1H4q-1 0-1-1v-3" fill="none" stroke="#fff" strokeWidth="1.5" />
    <path d="M6 7h9v5H5z" fill="#fff" />
    <path d="M18 8h1v4h-1z" fill="#fff" />
    <path d="M4 0L0 7h3l-2 5 6-7H4l3-5z" fill="#fff" />
  </svg>
)

const TrafficIcon = () => (
  <svg width="32" height="22" viewBox="0 0 32 22">
    {Array.from({ length: 8 }, (_, i) => (
      <g key={i}>
        <path d={`M${i * 4} 0h3v${11 - i}h-3z`} fill="#5f7a12" />
        <path d={`M${i * 4} ${12 - i}h3V22h-3z`} fill="#12466e" />
      </g>
    ))}
  </svg>
)

const taskIcons = [
  ['タスク ビュー', <TaskViewIcon />],
  ['Copilot', <CopilotIcon />],
  ['Teams', <TeamsIcon />],
  ['エクスプローラー', <FolderIcon />],
  ['Edge', <EdgeIcon />],
  ['Store', <StoreIcon />],
  ['設定', <GearsIcon />],
  ['コンパス', <CompassIcon />],
  ['Yahoo!', <YahooLogo>Y<i>!</i></YahooLogo>],
  ['Firefox', <FirefoxIcon />],
  ['ミュージック', <MusicIcon />],
  ['MetaEditor', <BookIcon />, true],
  ['ハート', <HeartIcon />, true],
  ['FX', <FxTile>FX</FxTile>, true, true],
]

const Tabs = ({ items }) => (
  <TabStrip role="tablist">
    {items.map(([label, width, count], i) => (
      <Tab key={label} role="tab" aria-selected={i === 0} $width={width} $active={i === 0}>
        {label}
        {count && <sub>{count}</sub>}
      </Tab>
    ))}
  </TabStrip>
)

const Tools = () => (
  <ToolArea>
    <Toolbars>
      <Toolbar $width={1021} $left={0} $line>
        <Grip $edge />
        <Spacer />
        <ToolButton $width={36} aria-label="シグナル"><SignalIcon /></ToolButton>
        <ToolButton $width={90}><ExpertIcon />自動売買</ToolButton>
        <Divider />
        <Grip />
        <ToolButton aria-label="バーチャート">
          <AxisIcon><path d="M10 12h3V4h3M13 3v9" fill="none" stroke="#1c9430" strokeWidth="2" /></AxisIcon>
        </ToolButton>
        <ToolButton $width={32} $pressed aria-label="ローソク足">
          <AxisIcon><path d="M12 0v15" stroke="#137a20" /><path d="M9 3h6v8H9z" fill="#25bf3a" stroke="#137a20" /></AxisIcon>
        </ToolButton>
        <ToolButton aria-label="ライン">
          <AxisIcon><path d="M4 13l6-7q2-1 3 2l5 3" fill="none" stroke="#2f8a3c" strokeWidth="2" /></AxisIcon>
        </ToolButton>
        <Divider />
        <ToolButton aria-label="拡大"><Magnifier plus /></ToolButton>
        <ToolButton aria-label="縮小"><Magnifier /></ToolButton>
        <ToolButton $width={36} aria-label="整列"><TileIcon /></ToolButton>
        <Divider />
        <ToolButton $width={34} $pressed aria-label="自動スクロール">
          <AxisIcon><path d="M10 4l5 4-5 4z" fill="#25bf3a" stroke="#137a20" /></AxisIcon>
        </ToolButton>
        <ToolButton aria-label="シフト">
          <AxisIcon><path d="M11 2v12" stroke="#2d6aa8" strokeWidth="2" /><path d="M19 8h-6m3-3l-3 3 3 3" fill="none" stroke="#c8461c" strokeWidth="2" /></AxisIcon>
        </ToolButton>
        <Divider />
        <ToolButton $width={46} aria-label="インディケータ"><IndicatorIcon /><CaretIcon /></ToolButton>
        <ToolButton $width={48} aria-label="時間足"><ClockIcon /><CaretIcon /></ToolButton>
        <ToolButton $width={48} aria-label="定型チャート"><TemplateIcon /><CaretIcon /></ToolButton>
      </Toolbar>
      <Toolbar $width={681} $left={0}>
        <Grip $edge />
        <Spacer />
        {['M15', 'M30', 'H1', 'H4', 'D1', 'W1', 'MN'].map((period) => (
          <PeriodButton key={period} $pressed={period === 'M30'}>{period}</PeriodButton>
        ))}
      </Toolbar>
    </Toolbars>
    <AppActions>
      <ActionButton aria-label="検索">
        <svg width="18" height="18" viewBox="0 0 18 18" fill="none">
          <path d="M7 11l-6 6" stroke="#2f62c0" strokeWidth="3" />
          <circle cx="11" cy="7" r="5" fill="#f4f8fd" stroke="#3a74cc" strokeWidth="2" />
        </svg>
      </ActionButton>
      <ActionButton aria-label="通知">
        <svg width="26" height="24" viewBox="0 0 26 24">
          <path d="M10 6q9 0 9 6t-8 6q-2 3-5 4l1-4q-6-1-6-6t9-6z" fill="#e8e8ee" stroke="#9a9aa2" strokeWidth="1.5" />
        </svg>
        <ChatBadge>1</ChatBadge>
      </ActionButton>
    </AppActions>
  </ToolArea>
)

const MarketWatch = () => (
  <Panel>
    <PanelTitle>
      <h2>気配値表示: 15:31:07</h2>
      <CloseButton aria-label="閉じる"><CrossIcon weight={2} /></CloseButton>
    </PanelTitle>
    <QuoteBody>
      <QuoteTable>
        <colgroup>
          <col width="132" />
          <col width="88" />
          <col width="88" />
        </colgroup>
        <thead>
          <tr><th>通貨ペア</th><th>Bid</th><th>Ask</th></tr>
        </thead>
        <tbody>
          {quotes.map(([symbol, bid, ask, up]) => (
            <QuoteRow key={symbol} $up={up}>
              <SymbolCell><div><ArrowIcon up={up} />{symbol}</div></SymbolCell>
              <td>{bid}</td>
              <td>{ask}</td>
            </QuoteRow>
          ))}
          <QuoteRow><td /><td /><td /></QuoteRow>
        </tbody>
      </QuoteTable>
      <ScrollTrack><ScrollThumb /></ScrollTrack>
    </QuoteBody>
    <Tabs items={[['通貨ペアリスト', 111], ['ティックチャート', 108]]} />
  </Panel>
)

const AlertDialog = () => (
  <Dialog role="dialog" aria-labelledby="alert-title">
    <DialogTitle>
      <BellIcon size={17} />
      <h1 id="alert-title">アラート</h1>
      <DialogButton aria-label="ヘルプ">?</DialogButton>
      <DialogButton aria-label="閉じる"><CrossIcon size={14} weight={1} /></DialogButton>
    </DialogTitle>
    <Message>
      <BellIcon size={50} />
      <p>{alerts[0][1]}</p>
      <MessageScroll>
        <svg width="10" height="8" viewBox="0 0 10 8"><path d="M5 0l5 8H0z" fill="#9c9c9c" /></svg>
        <svg width="10" height="8" viewBox="0 0 10 8"><path d="M0 0h10L5 8z" fill="#9c9c9c" /></svg>
      </MessageScroll>
    </Message>
    <AlertList>
      <table>
        <colgroup>
          <col width="103" />
          <col />
        </colgroup>
        <tbody>
          {alerts.map(([time, text], i) => (
            <tr key={i}>
              <td><div><BellIcon size={17} />{time}</div></td>
              <td>{text}</td>
            </tr>
          ))}
        </tbody>
      </table>
    </AlertList>
    <DialogFooter>
      <OkButton>OK</OkButton>
    </DialogFooter>
  </Dialog>
)

const TerminalPanel = () => (
  <Terminal>
    <TerminalSide>
      <CloseButton aria-label="閉じる"><CrossIcon weight={2} /></CloseButton>
      <TerminalTitle>ターミナル</TerminalTitle>
    </TerminalSide>
    <TerminalMain>
      <PanelBody>
        <OrderTable>
          <colgroup>
            {orderColumns.map(([, width], i) => <col key={i} width={width} />)}
          </colgroup>
          <thead>
            <tr>
              {orderColumns.map(([label], i) => (
                <th key={i}>{label}{i === 0 && <SortMark>/</SortMark>}</th>
              ))}
            </tr>
          </thead>
          <tbody>
            <tr>
              <td colSpan={11}>
                <div>
                  <svg width="12" height="12" viewBox="0 0 12 12" fill="none" stroke="#8c8c8c">
                    <circle cx="6" cy="6" r="4" strokeWidth="2" />
                    <path d="M3 9l6-6" />
                  </svg>
                  {'残高: 0 JPY  有効証拠金: 0  余剰証拠金: 0'}
                </div>
              </td>
              <td>0</td>
            </tr>
          </tbody>
        </OrderTable>
      </PanelBody>
      <Tabs items={terminalTabs} />
    </TerminalMain>
  </Terminal>
)

const App = () => (
  <Desktop>
    <GlobalStyle />
    <DesktopLabel $top={91}>M</DesktopLabel>
    <DesktopLabel $top={559}>M</DesktopLabel>
    <Window>
      <TitleBar>
        M30]
        <Spacer />
        <CaptionButton aria-label="最小化">
          <svg width="12" height="12" viewBox="0 0 12 12"><path d="M0 6h12" stroke="#8a8a8a" /></svg>
        </CaptionButton>
        <CaptionButton aria-label="最大化">
          <svg width="12" height="12" viewBox="0 0 12 12"><rect x="0.5" y="0.5" width="11" height="11" rx="1" fill="none" stroke="#8a8a8a" /></svg>
        </CaptionButton>
        <CaptionButton aria-label="閉じる"><CrossIcon size={14} color="#8a8a8a" weight={1} /></CaptionButton>
      </TitleBar>
      <MenuBar>
        <MenuItem>ウィンドウ (W)</MenuItem>
        <MenuItem>ヘルプ (H)</MenuItem>
        <Spacer />
        <ChildButton aria-label="最小化">
          <svg width="8" height="8" viewBox="0 0 8 8"><path d="M1 6h6" stroke="#8a9bab" strokeWidth="2" /></svg>
        </ChildButton>
        <ChildButton aria-label="元に戻す">
          <svg width="9" height="9" viewBox="0 0 9 9" fill="none" stroke="#8a9bab">
            <path d="M3 3V1h5v4H6" strokeWidth="1.5" />
            <path d="M1 4h5v4H1z" strokeWidth="1.5" />
          </svg>
        </ChildButton>
        <ChildButton aria-label="閉じる"><CrossIcon size={8} color="#8a9bab" weight={2.5} /></ChildButton>
      </MenuBar>
      <Tools />
      <Workspace>
        <Sidebar>
          <Panel $grow>
            <PanelBody />
            <Tabs items={[['全般', 56], ['お気に入り', 89]]} />
          </Panel>
          <MarketWatch />
        </Sidebar>
        <Chart />
      </Workspace>
      <TerminalPanel />
      <StatusBar>
        <StatusCell $first>F1キーでヘルプが表示されます</StatusCell>
        <StatusCell $width={149}>Default</StatusCell>
        <StatusCell $width={131} />
        <StatusCell $width={90} />
        <StatusCell $width={89} />
        <StatusCell $width={85} />
        <StatusCell $width={87} />
        <StatusCell $width={84} />
        <StatusCell $width={172}><TrafficIcon />17/1 kb</StatusCell>
      </StatusBar>
    </Window>
    <AlertDialog />
    <Taskbar>
      <TaskSide>
        <News>
          <NewsIcon />
          <div>ニュース速報<span>青森･岩手･秋田...</span></div>
        </News>
      </TaskSide>
      <TaskCenter>
        <TaskButton aria-label="スタート"><StartIcon /></TaskButton>
        <SearchBox>
          <SearchIcon />
          <input type="search" placeholder="検索" aria-label="検索" />
          <CameraIcon />
        </SearchBox>
        {taskIcons.map(([label, icon, running, active]) => (
          <TaskButton key={label} aria-label={label} $running={running} $active={active}>{icon}</TaskButton>
        ))}
      </TaskCenter>
      <TaskSide $end>
        <TrayButton $width={40} aria-label="隠れているインジケーター">
          <svg width="14" height="9" viewBox="0 0 14 9"><path d="M1 8l6-6 6 6" fill="none" stroke="#fff" strokeWidth="2" /></svg>
        </TrayButton>
        <TrayButton $width={40} aria-label="入力モード">
          <svg width="16" height="20" viewBox="0 0 16 20"><path d="M1 20L8 1l7 19M3 13h10" fill="none" stroke="#fff" strokeWidth="1.5" /></svg>
        </TrayButton>
        <TrayButton $width={35} aria-label="ネットワーク"><WifiIcon /></TrayButton>
        <TrayButton $width={26} aria-label="音量"><SpeakerIcon /></TrayButton>
        <TrayButton $width={32} aria-label="バッテリー"><BatteryIcon /></TrayButton>
        <Clock>21:31<br />2025/08/20</Clock>
      </TaskSide>
    </Taskbar>
  </Desktop>
)

export default App
